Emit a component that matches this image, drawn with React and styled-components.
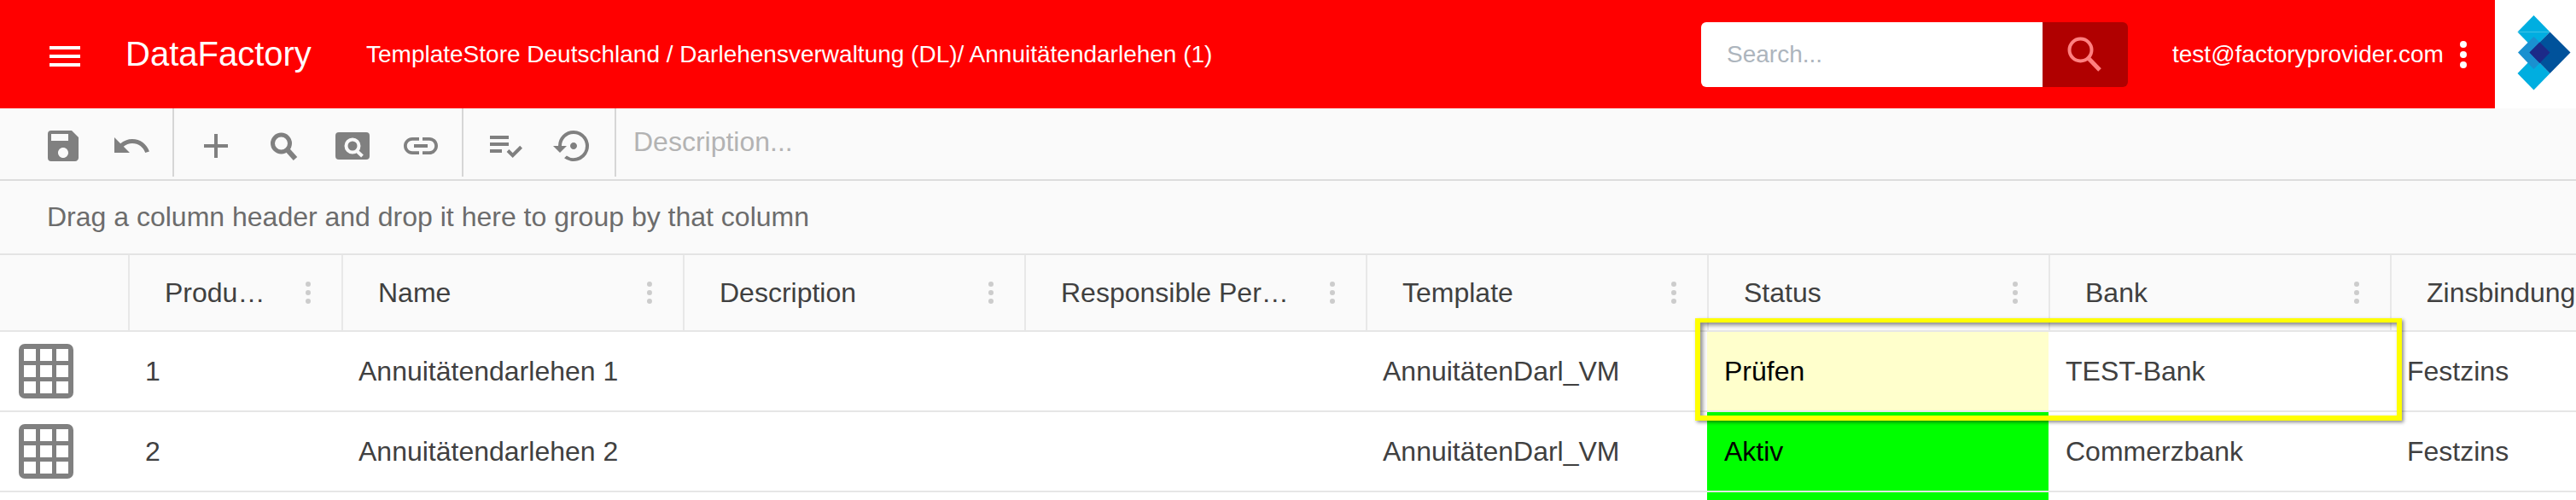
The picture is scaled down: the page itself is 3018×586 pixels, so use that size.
import React from "react";
import styled, { createGlobalStyle } from "styled-components";
import {
  MdAdd,
  MdLink,
  MdMenu,
  MdPlaylistAddCheck,
  MdSave,
  MdSettingsBackupRestore,
  MdUndo,
} from "react-icons/md";

const GlobalStyle = createGlobalStyle`
  html, body {
    margin: 0;
    height: 586px;
    overflow: hidden;
    background: #fff;
    font-family: "Liberation Sans", Arial, sans-serif;
  }
`;

const Page = styled.div`
  width: 3018px;
  height: 586px;
  overflow: hidden;
`;

const Header = styled.header`
  display: flex;
  align-items: center;
  height: 127px;
  background: #ff0000;
  color: #fff;
`;

const MenuButton = styled.button`
  display: flex;
  margin: 5px 0 0 52px;
  padding: 0;
  border: 0;
  background: none;
  color: #fff;
  font-size: 48px;
`;

const Brand = styled.div`
  width: 282px;
  margin-left: 47px;
  font-size: 40px;
`;

const Breadcrumb = styled.div`
  flex: 1;
  font-size: 28px;
`;

const SearchForm = styled.form`
  display: flex;
  height: 76px;
  margin: 0;
  border-radius: 6px;
  overflow: hidden;
`;

const SearchInput = styled.input`
  width: 400px;
  box-sizing: border-box;
  padding: 0 0 0 30px;
  border: 0;
  background: #fff;
  font: 28px "Liberation Sans", Arial, sans-serif;

  &::placeholder {
    color: #adb5bd;
    opacity: 1;
  }
`;

const SearchButton = styled.div`
  display: flex;
  width: 100px;
  background: #b00000;
`;

const Email = styled.div`
  width: 337px;
  margin-left: 52px;
  font-size: 28px;
`;

const Kebab = styled.span`
  display: flex;
  flex-direction: column;
  gap: ${(p) => p.$gap}px;

  i {
    display: block;
    width: ${(p) => p.$size}px;
    height: ${(p) => p.$size}px;
    border-radius: 50%;
    background: ${(p) => p.$color};
  }
`;

const UserMenu = styled.div`
  display: flex;
  width: 41px;
  margin-top: 1px;
`;

const LogoCell = styled.div`
  display: flex;
  width: 95px;
  height: 127px;
  background: #fff;
`;

const Toolbar = styled.div`
  display: flex;
  height: 83px;
  box-sizing: content-box;
  padding-left: 34px;
  background: #fafafa;
  border-bottom: 2px solid #dddddd;
`;

const ToolGroup = styled.div`
  display: flex;
  height: 80px;
  padding-right: 8px;
  margin-right: 9px;
  border-right: 2px solid #d6d6d6;
`;

const ToolButton = styled.button`
  display: flex;
  align-items: center;
  justify-content: center;
  width: 80px;
  padding: 8px 0 0;
  border: 0;
  background: none;
  color: #808080;
  font-size: 48px;
`;

const Description = styled.input`
  flex: 1;
  height: 78px;
  margin-left: 11px;
  padding: 0;
  border: 0;
  background: none;
  font: 32px "Liberation Sans", Arial, sans-serif;

  &::placeholder {
    color: #b3b3b3;
    opacity: 1;
  }
`;

const GroupHint = styled.div`
  display: flex;
  align-items: center;
  height: 85px;
  padding-left: 55px;
  background: #fafafa;
  color: #6c6c6c;
  font-size: 32px;
`;

const Grid = styled.div`
  position: relative;
  height: 289px;
  overflow: hidden;
  border-top: 2px solid #e4e4e4;
`;

const HeadRow = styled.div`
  display: flex;
  height: 88px;
  background: #fafafa;
  border-bottom: 2px solid #e6e6e6;
`;

const HeadCell = styled.div`
  display: flex;
  flex: none;
  align-items: center;
  gap: 40px;
  box-sizing: border-box;
  width: ${(p) => p.$width}px;
  padding: 0 36px 0 41px;
  border-left: ${(p) => (p.$first ? "0" : "2px solid #e8e8e8")};
  color: #404040;
  font-size: 32px;
`;

const HeadTitle = styled.span`
  flex: 1;
  min-width: 0;
  white-space: nowrap;
  overflow: hidden;
  text-overflow: ellipsis;
`;

const Row = styled.div`
  display: flex;
  height: 94px;
  box-sizing: border-box;
  background: #fff;
  border-bottom: 2px solid #e6e6e6;
`;

const Cell = styled.div`
  display: flex;
  flex: none;
  align-items: center;
  box-sizing: border-box;
  width: ${(p) => p.$width}px;
  padding-left: 20px;
  background: ${(p) => p.$bg || "transparent"};
  color: ${(p) => (p.$bg ? "#000" : "#404040")};
  font-size: 32px;
`;

const IconCell = styled.div`
  display: flex;
  flex: none;
  align-items: center;
  box-sizing: border-box;
  width: 150px;
  padding-left: 22px;
`;

const Highlight = styled.div`
  position: absolute;
  top: 74px;
  left: 1986px;
  width: 828px;
  height: 120px;
  box-sizing: border-box;
  border: 6px solid #ffff00;
  border-top-width: 5px;
  box-shadow: 2px 2px 4px rgba(0, 0, 0, 0.45),
    inset 3px 3px 5px rgba(0, 0, 0, 0.45);
`;

const Magnifier = () => (
  <svg width="48" height="48" viewBox="0 0 48 48" fill="none" stroke="currentColor">
    <circle cx="20.5" cy="21" r="10" strokeWidth="5" />
    <path d="M28 29l9 10" strokeWidth="6" />
  </svg>
);

const BoxedMagnifier = () => (
  <svg width="48" height="48" viewBox="0 0 48 48">
    <rect x="4" y="8" width="40" height="32" rx="4" fill="currentColor" />
    <circle cx="24" cy="24" r="7.5" fill="none" stroke="#fafafa" strokeWidth="4" />
    <path d="M28.5 29.5l7 6.5" fill="none" stroke="#fafafa" strokeWidth="4" />
  </svg>
);

const SearchGlyph = () => (
  <svg width="100" height="76" viewBox="0 0 100 76" fill="none" stroke="#ff8080">
    <circle cx="44.5" cy="32.5" r="13" strokeWidth="4" />
    <path d="M54.5 43l12.5 13" strokeWidth="5" />
  </svg>
);

const Logo = () => (
  <svg width="95" height="127" viewBox="0 0 95 127">
    <polygon points="45.5,18 64.5,37.5 26.5,37.5" fill="#00aee0" />
    <polygon points="26.5,37.5 64.5,37.5 45.5,57" fill="#00aee0" />
    <polygon points="26.5,86 45.5,66.5 64.5,86 45.5,105.5" fill="#00aee0" />
    <polygon points="27,61.5 45.5,43 64.5,61.5 45.5,81" fill="#1a90d0" />
    <polygon points="64.5,37.5 88.5,61.5 64.5,86 40.5,61.5" fill="#00529b" />
    <polygon points="52.5,49.5 64.5,61.5 52.5,74 40.5,61.5" fill="#1c2a88" />
  </svg>
);

const GridIcon = () => (
  <svg width="64" height="64" viewBox="0 0 64 64">
    <rect width="64" height="64" rx="7" fill="#808080" />
    {[6, 25, 44].flatMap((y) =>
      [6, 25, 44].map((x) => (
        <rect key={`${x}-${y}`} x={x} y={y} width="14" height="14" fill="#fff" />
      ))
    )}
  </svg>
);

const columns = [
  { title: "Produktnummer", width: 250, key: "id" },
  { title: "Name", width: 400, key: "name" },
  { title: "Description", width: 400, key: "description" },
  { title: "Responsible Person", width: 400, key: "person" },
  { title: "Template", width: 400, key: "template" },
  { title: "Status", width: 400, key: "status" },
  { title: "Bank", width: 400, key: "bank" },
  { title: "Zinsbindung", width: 400, key: "binding", last: true },
];

const statusColors = { "Prüfen": "#ffffcc", Aktiv: "#00ff00" };

const rows = [
  { id: "1", name: "Annuitätendarlehen 1", template: "AnnuitätenDarl_VM", status: "Prüfen", bank: "TEST-Bank", binding: "Festzins" },
  { id: "2", name: "Annuitätendarlehen 2", template: "AnnuitätenDarl_VM", status: "Aktiv", bank: "Commerzbank", binding: "Festzins" },
];

const Dots = ({ size, gap, color }) => (
  <Kebab $size={size} $gap={gap} $color={color}>
    <i />
    <i />
    <i />
  </Kebab>
);

const App = () => {
  return (
    <Page>
      <GlobalStyle />
      <Header>
        <MenuButton>
          <MdMenu />
        </MenuButton>
        <Brand>DataFactory</Brand>
        <Breadcrumb>
          TemplateStore Deutschland / Darlehensverwaltung (DL)/ Annuitätendarlehen (1)
        </Breadcrumb>
        <SearchForm>
          <SearchInput placeholder="Search..." />
          <SearchButton>
            <SearchGlyph />
          </SearchButton>
        </SearchForm>
        <Email>test@factoryprovider.com</Email>
        <UserMenu>
          <Dots size={8} gap={4} color="#fff" />
        </UserMenu>
        <LogoCell>
          <Logo />
        </LogoCell>
      </Header>

      <Toolbar>
        <ToolGroup>
          <ToolButton><MdSave /></ToolButton>
          <ToolButton><MdUndo /></ToolButton>
        </ToolGroup>
        <ToolGroup>
          <ToolButton><MdAdd /></ToolButton>
          <ToolButton><Magnifier /></ToolButton>
          <ToolButton><BoxedMagnifier /></ToolButton>
          <ToolButton><MdLink /></ToolButton>
        </ToolGroup>
        <ToolGroup>
          <ToolButton><MdPlaylistAddCheck /></ToolButton>
          <ToolButton><MdSettingsBackupRestore /></ToolButton>
        </ToolGroup>
        <Description placeholder="Description..." />
      </Toolbar>

      <GroupHint>Drag a column header and drop it here to group by that column</GroupHint>

      <Grid>
        <HeadRow>
          <HeadCell $first $width={150} />
          {columns.map((col) => (
            <HeadCell key={col.key} $width={col.width}>
              <HeadTitle>{col.title}</HeadTitle>
              {!col.last && <Dots size={6.5} gap={3.5} color="#cccccc" />}
            </HeadCell>
          ))}
        </HeadRow>
        {rows.map((row) => (
          <Row key={row.id}>
            <IconCell>
              <GridIcon />
            </IconCell>
            {columns.map((col) => (
              <Cell
                key={col.key}
                $width={col.width}
                $bg={col.key === "status" ? statusColors[row.status] : undefined}
              >
                {row[col.key]}
              </Cell>
            ))}
          </Row>
        ))}
        {/* third row only peeks in at the bottom edge, its text is below the fold */}
        <Row>
          <IconCell />
          {columns.map((col) => (
            <Cell
              key={col.key}
              $width={col.width}
              $bg={col.key === "status" ? statusColors.Aktiv : undefined}
            />
          ))}
        </Row>
        <Highlight />
      </Grid>
    </Page>
  );
};

export default App;
